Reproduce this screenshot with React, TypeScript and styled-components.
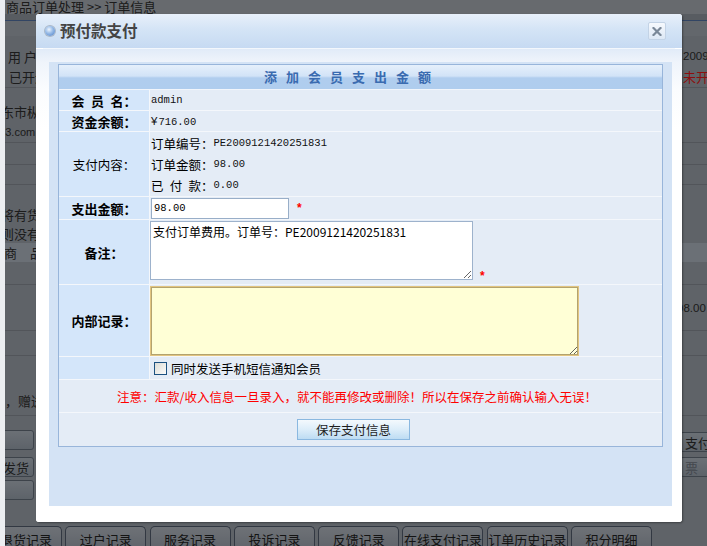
import React from 'react';
import styled, { createGlobalStyle, css } from 'styled-components';

const CJK = `"Noto Sans CJK SC", "Noto Sans", sans-serif`;
const MONO = `"Liberation Mono", "DejaVu Sans Mono", monospace`;
const SANS = `"Liberation Sans", "Noto Sans CJK SC", sans-serif`;

const GlobalStyle = createGlobalStyle`
  html, body { margin: 0; padding: 0; }
  body {
    width: 707px;
    height: 546px;
    overflow: hidden;
    font-family: ${CJK};
    font-size: 12.5px;
    color: #000;
  }
`;

/* ---------- order page lying under the modal ---------- */

const Screen = styled.div`
  display: flex;
  width: 707px;
  height: 546px;
  overflow: hidden;
`;

const FrameEdge = styled.div`
  flex: none;
  width: 5px;
  background: #eceef1;
`;

const Viewport = styled.div`
  position: relative;
  flex: 1;
  overflow: hidden;
  background: #adb4bd;
`;

const Page = styled.div`
  display: flex;
  flex-direction: column;
  font-family: ${CJK};
  font-size: 13px;
  color: #333;
`;

const Breadcrumb = styled.div`
  flex: none;
  height: 14px;
  line-height: 14px;
  padding-left: 1px;
  background: #bcc2c8;
  white-space: nowrap;
`;

type Tone = 'band' | 'bar' | 'head';

const Row = styled.div<{ $h: number; $line?: boolean; $tone?: Tone }>`
  display: flex;
  flex: none;
  align-items: center;
  height: ${(p) => p.$h}px;
  border-bottom: ${(p) => (p.$line ? '1px solid #959ca5' : 'none')};
  background: ${(p) =>
    p.$tone === 'head' ? '#c3ccd7' : p.$tone === 'band' ? '#a1a8b1' : 'transparent'};
  ${(p) =>
    p.$tone === 'bar' &&
    css`
      border-top: 1px solid #5b7fb6;
      background: #b5bcc5;
    `}
`;

const LeftCell = styled.div<{ $indent: number; $latin?: boolean }>`
  flex: none;
  width: 677px;
  overflow: hidden;
  white-space: nowrap;
  text-indent: ${(p) => p.$indent}px;
  font-family: ${(p) => (p.$latin ? SANS : CJK)};
  font-size: ${(p) => (p.$latin ? '11px' : '13px')};
`;

const RightCell = styled.div<{ $indent: number; $red?: boolean; $latin?: boolean }>`
  flex: 1;
  padding-left: 1px;
  white-space: nowrap;
  text-indent: ${(p) => p.$indent}px;
  color: ${(p) => (p.$red ? '#ff1a1a' : '#333')};
  font-family: ${(p) => (p.$latin ? SANS : CJK)};
  font-size: ${(p) => (p.$latin ? '11.5px' : '13px')};
`;

const PageButton = styled.span<{ $shift: number; $end?: boolean; $muted?: boolean }>`
  display: inline-flex;
  align-items: center;
  justify-content: ${(p) => (p.$end ? 'flex-end' : 'flex-start')};
  box-sizing: border-box;
  width: 60px;
  height: 20px;
  margin-left: ${(p) => p.$shift}px;
  padding: 0 4px;
  border: 1px solid #6f7a88;
  border-radius: 3px;
  background: linear-gradient(#c3ccd6, #aab4c0);
  color: ${(p) => (p.$muted ? '#7d8590' : '#333')};
  font-size: 13px;
  text-indent: 0;
`;

const TabStrip = styled.div`
  display: flex;
  flex: none;
  gap: 3.3px;
  margin-left: -15px;
`;

const Tab = styled.div<{ $w: number }>`
  flex: none;
  box-sizing: border-box;
  width: ${(p) => p.$w}px;
  height: 24px;
  padding-top: 2px;
  display: flex;
  align-items: center;
  justify-content: center;
  border: 1px solid #5b6678;
  border-bottom: none;
  border-radius: 5px 5px 0 0;
  background: linear-gradient(#c9cfd8, #adb5c1);
  color: #262626;
  font-size: 13px;
  white-space: nowrap;
`;

const Mask = styled.div`
  position: absolute;
  inset: 0;
  background: rgba(0, 0, 0, 0.45);
`;

/* ---------- modal ---------- */

const Dialog = styled.section`
  position: absolute;
  left: 31px;
  top: 14px;
  width: 646px;
  height: 508px;
  display: flex;
  flex-direction: column;
  background: #fff;
  border-radius: 3px;
  box-shadow: 1px 1px 2px rgba(0, 0, 0, 0.35);
  overflow: hidden;
`;

const DialogHeader = styled.header`
  flex: none;
  display: flex;
  align-items: center;
  height: 34px;
  padding: 0 16px 0 9px;
  background: linear-gradient(#e8f0fa, #d4e4f6 45%, #c6daf2);
`;

const TitleOrb = styled.span`
  flex: none;
  width: 10px;
  height: 10px;
  border-radius: 50%;
  background: radial-gradient(circle at 40% 35%, #eef5fd 0, #95b9e6 45%, #4a7cc2 100%);
  box-shadow: 0 0 0 1px #aab7c7;
`;

const DialogTitle = styled.h1`
  margin: 0 0 0 5px;
  font: bold 15.5px/1 ${CJK};
  color: #444;
`;

const CloseButton = styled.button`
  margin-left: auto;
  width: 18px;
  height: 18px;
  padding: 0;
  display: flex;
  align-items: center;
  justify-content: center;
  border: 1px solid #c3d3e6;
  border-radius: 2px;
  background: linear-gradient(#f6f9fd, #dde8f5);
  cursor: pointer;
`;

const HeaderRule = styled.div`
  flex: none;
  height: 1px;
  margin: 0 7px;
  background: #f3f7fc;
`;

const DialogBody = styled.div`
  flex: 1;
  display: flex;
  padding: 13px 10px 16px 13px;
  background: linear-gradient(#e1ebf8 0, #eff4fb 13px, #fafcfe 40px, #fff 80px);
`;

const Panel = styled.div`
  flex: 1;
  padding: 2px 9px;
  background: #d4e3f5;
`;

const FormGrid = styled.div`
  display: grid;
  grid-template-columns: 91px 1fr;
  width: 605px;
  box-sizing: border-box;
  border: 1px solid #98b5da;
  background: #e4ecf6;
`;

const Caption = styled.div`
  grid-column: 1 / -1;
  height: 24px;
  padding-right: 17px;
  border-bottom: 1px solid #f1f5fb;
  background: linear-gradient(#e6f0fb, #d2e3f7 46%, #b0cdee 54%, #afcdee);
  color: #3a6bb0;
  font: bold 13px/24px ${CJK};
  letter-spacing: 9px;
  text-align: center;
`;

const Label = styled.div<{ $h: number; $plain?: boolean }>`
  height: ${(p) => p.$h}px;
  display: flex;
  align-items: center;
  justify-content: center;
  border-right: 1px solid #f4f7fb;
  border-bottom: 1px solid #f4f7fb;
  background: #d4e6fa;
  font-size: ${(p) => (p.$plain ? '12.5px' : '13px')};
  font-weight: ${(p) => (p.$plain ? 400 : 700)};
  white-space: nowrap;
`;

const Value = styled.div<{ $h: number; $top?: boolean }>`
  height: ${(p) => p.$h}px;
  display: flex;
  align-items: ${(p) => (p.$top ? 'flex-start' : 'center')};
  padding: ${(p) => (p.$top ? '1px' : '0')} 0 0 1px;
  box-sizing: content-box;
  border-bottom: 1px solid #f4f7fb;
  background: #e4ecf6;
  white-space: nowrap;
`;

const StackedValue = styled.div<{ $h: number }>`
  height: ${(p) => p.$h}px;
  display: flex;
  flex-direction: column;
  justify-content: center;
  padding-left: 1px;
  border-bottom: 1px solid #f4f7fb;
  background: #e4ecf6;
  white-space: nowrap;
`;

const StackLine = styled.div`
  height: 21px;
  display: flex;
  align-items: center;
`;

const WideCell = styled.div<{ $h: number; $last?: boolean; $shift: number }>`
  grid-column: 1 / -1;
  height: ${(p) => p.$h}px;
  display: flex;
  align-items: center;
  justify-content: center;
  padding-right: ${(p) => p.$shift}px;
  border-bottom: ${(p) => (p.$last ? 'none' : '1px solid #f4f7fb')};
  background: #e4ecf6;
`;

const Term = styled.span`
  display: inline-block;
  width: 4em;
  text-align: justify;
  text-align-last: justify;
`;

const Code = styled.span`
  font-family: ${MONO};
  font-size: 10.5px;
  line-height: 1;
  color: #111;
`;

const Money = styled.span`
  line-height: 1;
`;

const Currency = styled.span`
  margin-right: 1px;
  font-family: ${SANS};
  font-size: 11.5px;
  color: #111;
`;

const AmountInput = styled.input`
  box-sizing: border-box;
  width: 138px;
  height: 21px;
  margin: 0;
  padding: 0 2px;
  border: 1px solid #98aec8;
  background: #fff;
  font-family: ${MONO};
  font-size: 10.5px;
  color: #000;
  outline: none;
`;

const NoteArea = styled.textarea`
  box-sizing: border-box;
  width: 323px;
  height: 59px;
  margin: 0 0 0 -1px;
  padding: 2px;
  border: 1px solid #9db2cc;
  background: #fff;
  font-family: ${CJK};
  font-size: 12px;
  line-height: 16px;
  color: #000;
  outline: none;
`;

const MemoArea = styled.textarea`
  box-sizing: border-box;
  width: 429px;
  height: 70px;
  margin: 0 0 0 -1px;
  padding: 2px;
  border: 1px solid #e2c580;
  box-shadow: inset 0 0 0 1px #b3a36f;
  background: #ffffd6;
  font-family: ${CJK};
  font-size: 12px;
  outline: none;
`;

const Required = styled.span<{ $bottom?: boolean }>`
  margin-left: ${(p) => (p.$bottom ? 7 : 8)}px;
  align-self: ${(p) => (p.$bottom ? 'flex-end' : 'center')};
  margin-bottom: ${(p) => (p.$bottom ? 2 : 0)}px;
  color: #ff0000;
  font: bold 12px/1 ${SANS};
`;

const NotifyCheck = styled.input`
  appearance: none;
  flex: none;
  width: 13px;
  height: 13px;
  margin: 0 4px 0 3px;
  border: 1px solid #1c5180;
  background: linear-gradient(135deg, #dcdcd6, #fbfbf9);
`;

const Notice = styled.p`
  margin: 0;
  color: #ff0000;
  font-size: 12.5px;
  white-space: nowrap;
`;

const SaveButton = styled.button`
  box-sizing: border-box;
  width: 113px;
  height: 21px;
  padding: 0;
  border: 1px solid #8ab8e0;
  background: linear-gradient(#f4f9fd, #dcedf9 50%, #bddcf3);
  color: #1e1e1e;
  font-family: ${CJK};
  font-size: 12.5px;
  cursor: pointer;
`;

/* ---------- data ---------- */

type BgRow = {
  h: number;
  left?: string;
  right?: string;
  indent?: number;
  rIndent?: number;
  red?: boolean;
  line?: boolean;
  tone?: Tone;
  latinLeft?: boolean;
  latinRight?: boolean;
  buttons?: { left?: string; right?: string; rightMuted?: boolean };
};

const bgRows: BgRow[] = [
  { h: 6, tone: 'band' },
  { h: 15, tone: 'bar' },
  { h: 10 },
  { h: 20, left: '用 户 名', indent: 3, right: '2009-12-14', latinRight: true },
  { h: 21, left: '已开通', indent: 4, right: '未开通', red: true, line: true },
  { h: 13 },
  { h: 20, left: '东市枞阳', indent: -4 },
  { h: 21, left: '163.com', indent: -12, latinLeft: true, line: true },
  { h: 21, line: true },
  { h: 19, line: true },
  { h: 19 },
  { h: 20, left: '将有货', indent: -4 },
  { h: 19, left: '则没有', indent: -4 },
  { h: 19, left: '商　品', indent: -1, tone: 'head' },
  { h: 22, line: true },
  { h: 45, right: '98.00', rIndent: -6, latinRight: true, line: true },
  { h: 24, line: true },
  { h: 34 },
  { h: 20, left: '，赠送' },
  { h: 5, line: true },
  { h: 16 },
  { h: 20, buttons: { left: '', right: '支付' } },
  { h: 5 },
  { h: 20, buttons: { left: '发货', right: '票', rightMuted: true } },
  { h: 5 },
  { h: 20, buttons: { left: '' } },
  { h: 24 },
];

const tabs = ['退货记录', '过户记录', '服务记录', '投诉记录', '反馈记录', '在线支付记录', '订单历史记录', '积分明细'];

export default function App() {
  return (
    <>
      <GlobalStyle />
      <Screen>
        <FrameEdge />
        <Viewport>
          <Page>
            <Breadcrumb>商品订单处理 &gt;&gt; 订单信息</Breadcrumb>
            {bgRows.map((r, i) => (
              <Row key={i} $h={r.h} $line={r.line} $tone={r.tone}>
                <LeftCell $indent={r.indent ?? 0} $latin={r.latinLeft}>
                  {r.buttons && r.buttons.left !== undefined ? (
                    <PageButton $shift={-31} $end>
                      {r.buttons.left}
                    </PageButton>
                  ) : (
                    r.left
                  )}
                </LeftCell>
                <RightCell $indent={r.rIndent ?? 0} $red={r.red} $latin={r.latinRight}>
                  {r.buttons && r.buttons.right !== undefined ? (
                    <PageButton $shift={-3} $muted={r.buttons.rightMuted}>
                      {r.buttons.right}
                    </PageButton>
                  ) : (
                    r.right
                  )}
                </RightCell>
              </Row>
            ))}
            <TabStrip>
              {tabs.map((t, i) => (
                <Tab key={t} $w={i === 0 ? 72 : 81}>
                  {t}
                </Tab>
              ))}
            </TabStrip>
          </Page>

          <Mask />

          <Dialog>
            <DialogHeader>
              <TitleOrb />
              <DialogTitle>预付款支付</DialogTitle>
              <CloseButton type="button" aria-label="关闭">
                <svg width="10" height="9" viewBox="0 0 10 9">
                  <path d="M1.5 1 L8.5 8 M8.5 1 L1.5 8" stroke="#7a8898" strokeWidth="2.2" strokeLinecap="square" />
                </svg>
              </CloseButton>
            </DialogHeader>
            <HeaderRule />
            <DialogBody>
              <Panel>
                <FormGrid>
                  <Caption>添加会员支出金额</Caption>

                  <Label $h={20}>
                    <Term>会员名</Term>：
                  </Label>
                  <Value $h={20}>
                    <Code>admin</Code>
                  </Value>

                  <Label $h={20}>
                    <Term>资金余额</Term>：
                  </Label>
                  <Value $h={20}>
                    <Money>
                      <Currency>¥</Currency>
                      <Code>716.00</Code>
                    </Money>
                  </Value>

                  <Label $h={64} $plain>
                    支付内容：
                  </Label>
                  <StackedValue $h={64}>
                    <StackLine>
                      <Term>订单编号</Term>：<Code>PE2009121420251831</Code>
                    </StackLine>
                    <StackLine>
                      <Term>订单金额</Term>：<Code>98.00</Code>
                    </StackLine>
                    <StackLine>
                      <Term>已付款</Term>：<Code>0.00</Code>
                    </StackLine>
                  </StackedValue>

                  <Label $h={22}>
                    <Term>支出金额</Term>：
                  </Label>
                  <Value $h={22}>
                    <AmountInput defaultValue="98.00" />
                    <Required>*</Required>
                  </Value>

                  <Label $h={64}>备注：</Label>
                  <Value $h={63} $top>
                    <NoteArea defaultValue="支付订单费用。订单号：PE2009121420251831" />
                    <Required $bottom>*</Required>
                  </Value>

                  <Label $h={71}>
                    <Term>内部记录</Term>：
                  </Label>
                  <Value $h={70} $top>
                    <MemoArea />
                  </Value>

                  <Label $h={22} />
                  <Value $h={22}>
                    <NotifyCheck type="checkbox" id="notify-sms" />
                    <label htmlFor="notify-sms">同时发送手机短信通知会员</label>
                  </Value>

                  <WideCell $h={32} $shift={7}>
                    <Notice>注意：汇款/收入信息一旦录入，就不能再修改或删除！所以在保存之前确认输入无误！</Notice>
                  </WideCell>

                  <WideCell $h={33} $shift={14} $last>
                    <SaveButton type="button">保存支付信息</SaveButton>
                  </WideCell>
                </FormGrid>
              </Panel>
            </DialogBody>
          </Dialog>
        </Viewport>
      </Screen>
    </>
  );
}
